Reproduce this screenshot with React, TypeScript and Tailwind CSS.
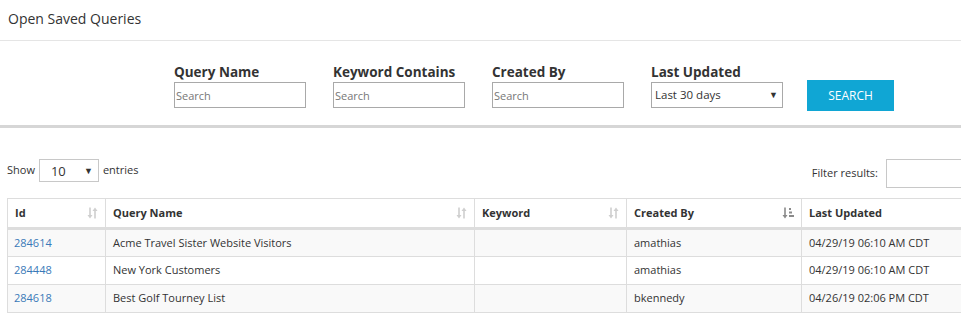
import React from "react";

const font = { fontFamily: '"Open Sans", "Liberation Sans", sans-serif' };

function SortIcon() {
  return (
    <svg width="11" height="12" viewBox="0 0 11 12" className="shrink-0">
      <g fill="none" stroke="#cfcfcf" strokeWidth="1.6">
        <path d="M3 0.5V10" />
        <path d="M8 2V11.5" />
      </g>
      <path d="M0.5 8L3 11.5L5.5 8Z" fill="#cfcfcf" />
      <path d="M5.5 4L8 0.5L10.5 4Z" fill="#cfcfcf" />
    </svg>
  );
}

function SortedIcon() {
  return (
    <svg width="12" height="12" viewBox="0 0 12 12" className="shrink-0">
      <path d="M3 0.5V10" stroke="#8a8a8a" strokeWidth="1.6" />
      <path d="M0.5 8L3 11.5L5.5 8Z" fill="#8a8a8a" />
      <rect x="7" y="1" width="2" height="2" fill="#8a8a8a" />
      <rect x="7" y="4.5" width="3" height="2" fill="#8a8a8a" />
      <rect x="7" y="8" width="5" height="2" fill="#8a8a8a" />
    </svg>
  );
}

const filters = ["Query Name", "Keyword Contains", "Created By"];

const columns = [
  { label: "Id", width: "w-[98px]", icon: "sort" },
  { label: "Query Name", width: "w-[369px]", icon: "sort" },
  { label: "Keyword", width: "w-[152px]", icon: "sort" },
  { label: "Created By", width: "w-[175px]", icon: "sorted" },
  { label: "Last Updated", width: "w-[206px]", icon: "none" },
];

const rows = [
  { id: "284614", name: "Acme Travel Sister Website Visitors", keyword: "", by: "amathias", updated: "04/29/19 06:10 AM CDT" },
  { id: "284448", name: "New York Customers", keyword: "", by: "amathias", updated: "04/29/19 06:10 AM CDT" },
  { id: "284618", name: "Best Golf Tourney List", keyword: "", by: "bkennedy", updated: "04/26/19 02:06 PM CDT" },
];

export default function App() {
  return (
    <div className="w-[961px] h-[313px] overflow-hidden bg-white text-[#333]" style={font}>
      <div className="h-[41px] border-b border-[#e5e5e5] px-2 flex items-center">
        <h1 className="text-[14px] leading-5 pb-[2px]">Open Saved Queries</h1>
      </div>

      <div className="flex items-end pl-[174px] pt-[21px] pb-[17px] border-b-[3px] border-[#d6d6d6]">
        {filters.map((f) => (
          <div key={f} className="w-[132px] mr-[27px] flex flex-col">
            <label className="text-[13.5px] font-bold leading-5">{f}</label>
            <input
              placeholder="Search"
              className="h-[26px] border border-[#a9a9a9] px-[1px] text-[11px] placeholder:text-[#777] outline-none"
            />
          </div>
        ))}
        <div className="w-[132px] mr-[24px] flex flex-col">
          <label className="text-[13.5px] font-bold leading-5">Last Updated</label>
          <div className="h-[26px] border border-[#a9a9a9] pl-[3px] pr-[4px] flex items-center justify-between text-[11.5px]">
            <span>Last 30 days</span>
            <span className="text-[9px]">▼</span>
          </div>
        </div>
        <button className="w-[87px] h-[31px] mb-[-3px] bg-[#10a6d4] text-white text-[12px]">SEARCH</button>
      </div>

      <div className="flex justify-between items-start pl-[7px] pt-[31px] w-[1007px]">
        <div className="flex items-center text-[11px]">
          <span>Show</span>
          <div className="ml-[4px] mr-[4px] w-[60px] h-[23px] border border-[#c8c8c8] flex items-center justify-between pl-[11px] pr-[5px]">
            <span className="text-[13px] pt-[2px]">10</span>
            <span className="text-[9px]">▼</span>
          </div>
          <span>entries</span>
        </div>
        <div className="flex items-center text-[11px]">
          <span className="mr-[8px]">Filter results:</span>
          <input className="w-[121px] h-[29px] border border-[#c8c8c8] outline-none" />
        </div>
      </div>

      <div className="pl-[7px] pt-[10px]">
        <table className="border-collapse w-[1000px] table-fixed text-[11px]">
          <thead>
            <tr className="h-[30px]">
              {columns.map((c) => (
                <th
                  key={c.label}
                  className={`${c.width} border border-[#ddd] border-b-[3px] px-[7px] text-left font-bold`}
                >
                  <div className="flex items-center justify-between">
                    <span>{c.label}</span>
                    {c.icon === "sort" && <SortIcon />}
                    {c.icon === "sorted" && <SortedIcon />}
                  </div>
                </th>
              ))}
            </tr>
          </thead>
          <tbody>
            {rows.map((r, i) => (
              <tr key={r.id} className={`h-[28px] ${i % 2 === 0 ? "bg-[#f9f9f9]" : "bg-white"}`}>
                <td className="border border-[#ddd] px-[6px] text-[#3a79b8]">{r.id}</td>
                <td className="border border-[#ddd] px-[7px]">{r.name}</td>
                <td className="border border-[#ddd] px-[7px]">{r.keyword}</td>
                <td className="border border-[#ddd] px-[7px]">{r.by}</td>
                <td className="border border-[#ddd] px-[7px]">{r.updated}</td>
              </tr>
            ))}
          </tbody>
        </table>
      </div>
    </div>
  );
}
